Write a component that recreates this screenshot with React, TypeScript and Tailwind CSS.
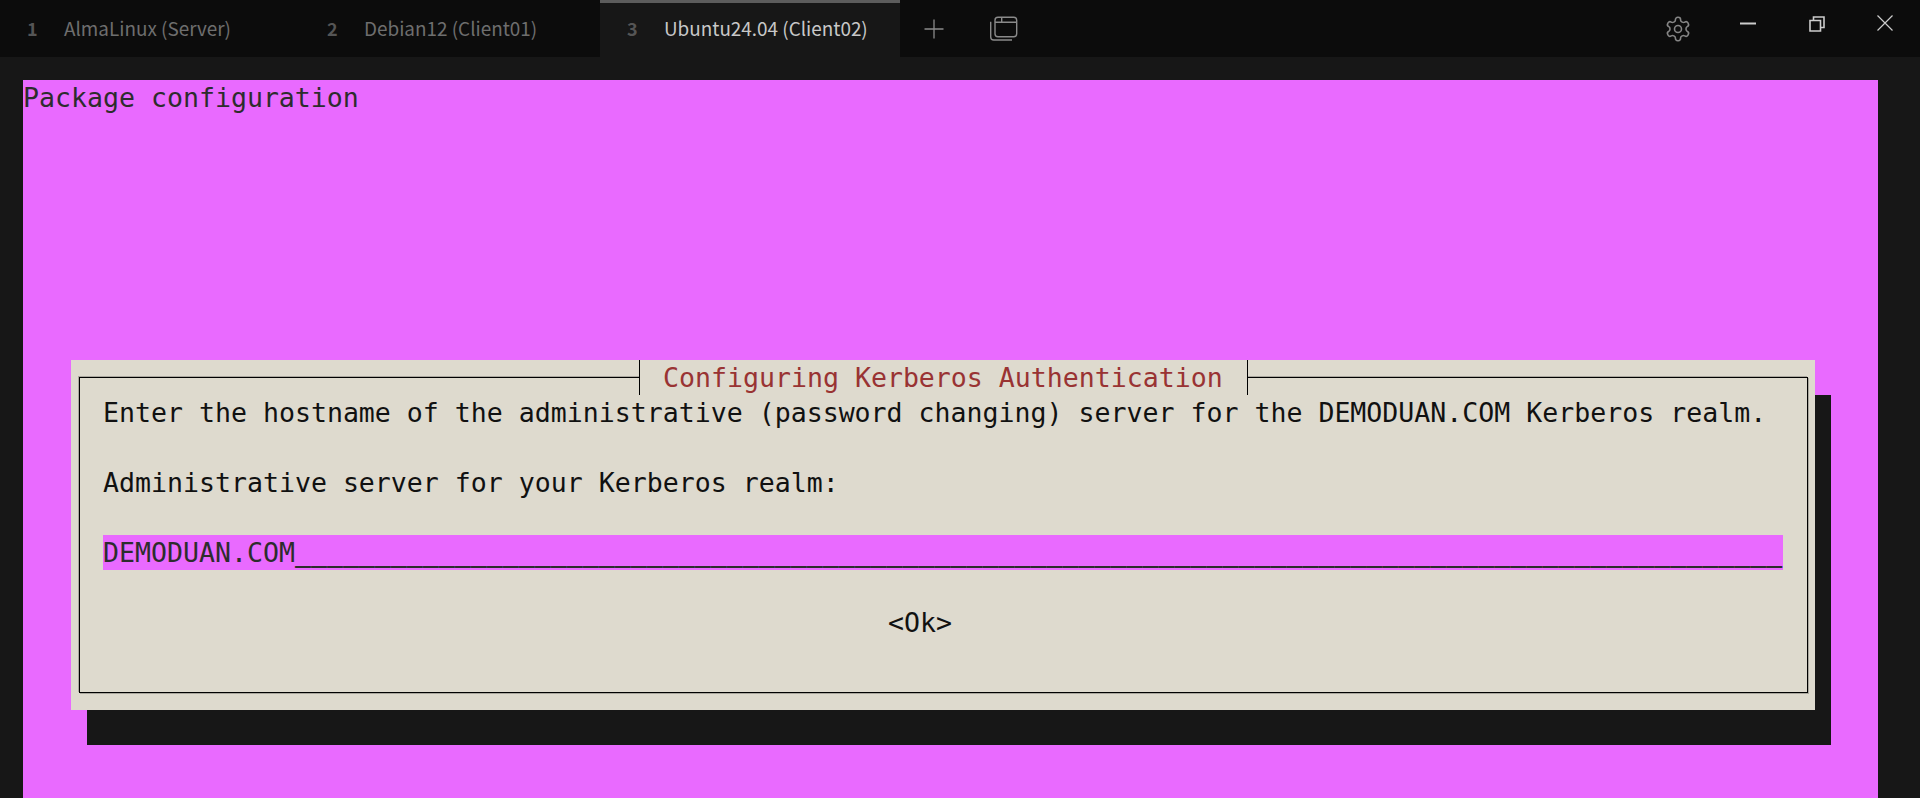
import React from "react";

const mono = "font-['DejaVu_Sans_Mono',monospace] text-[26.57px] leading-[35px] whitespace-pre";

function Tab({ n, label, active }: { n: string; label: string; active?: boolean }) {
  return (
    <div
      className={
        "flex h-[57px] w-[300px] items-center " +
        (active ? "border-t-[3px] border-[#5c5c5c] bg-[#171717] pb-[3px] text-[#c8c8c8]" : "bg-[#0c0c0c] text-[#6e6e6e]")
      }
    >
      <span className="w-[37px] pl-[27px] text-[18px] font-bold text-[#555555]">{n}</span>
      <span className="pl-[27px] text-[18.9px] whitespace-pre">{label}</span>
    </div>
  );
}

export default function App() {
  return (
    <div className="flex h-[798px] w-[1920px] flex-col overflow-hidden bg-[#171717] font-['Noto_Sans_CJK_SC','Noto_Sans',sans-serif]">
      <header className="flex h-[57px] shrink-0 items-center bg-[#0c0c0c]">
        <Tab n="1" label="AlmaLinux (Server)" />
        <Tab n="2" label="Debian12 (Client01)" />
        <Tab n="3" label="Ubuntu24.04 (Client02)" active />
        <svg className="ml-[23px] text-[#8a8a8a]" width="22" height="22" viewBox="0 0 22 22" fill="none" stroke="currentColor" strokeWidth="1.3">
          <path d="M11 1.5v19M1.5 11h19" />
        </svg>
        <svg className="ml-[45px] text-[#8a8a8a]" width="28" height="26" viewBox="0 0 28 26" fill="none" stroke="currentColor" strokeWidth="1.4">
          <path d="M8 1.3h15.7a3 3 0 0 1 3 3v13.4a3 3 0 0 1-3 3H8a3 3 0 0 1-3-3V4.3a3 3 0 0 1 3-3ZM5 6.3h21.7M11.7 1.3v5" />
          <path d="M.7 5.7V21a3 3 0 0 0 3 3H22" />
        </svg>
        <svg className="ml-[646px] text-[#858585]" width="28" height="28" viewBox="0 0 24 24" fill="none" stroke="currentColor" strokeWidth="1.35" strokeLinecap="round" strokeLinejoin="round">
          <path d="M12.22 2h-.44a2 2 0 0 0-2 2v.18a2 2 0 0 1-1 1.73l-.43.25a2 2 0 0 1-2 0l-.15-.08a2 2 0 0 0-2.73.73l-.22.38a2 2 0 0 0 .73 2.73l.15.1a2 2 0 0 1 1 1.72v.51a2 2 0 0 1-1 1.74l-.15.09a2 2 0 0 0-.73 2.73l.22.38a2 2 0 0 0 2.73.73l.15-.08a2 2 0 0 1 2 0l.43.25a2 2 0 0 1 1 1.73V20a2 2 0 0 0 2 2h.44a2 2 0 0 0 2-2v-.18a2 2 0 0 1 1-1.73l.43-.25a2 2 0 0 1 2 0l.15.08a2 2 0 0 0 2.73-.73l.22-.39a2 2 0 0 0-.73-2.73l-.15-.08a2 2 0 0 1-1-1.74v-.5a2 2 0 0 1 1-1.74l.15-.09a2 2 0 0 0 .73-2.73l-.22-.38a2 2 0 0 0-2.73-.73l-.15.08a2 2 0 0 1-2 0l-.43-.25a2 2 0 0 1-1-1.73V4a2 2 0 0 0-2-2z" />
          <circle cx="12" cy="12" r="3" />
        </svg>
        <svg className="mb-[11px] ml-[48px] text-[#cccccc]" width="16" height="3" viewBox="0 0 16 3" fill="none" stroke="currentColor" strokeWidth="2">
          <path d="M0 1.5h16" />
        </svg>
        <svg className="mb-[10px] ml-[53px] text-[#cccccc]" width="16" height="16" viewBox="0 0 16 16" fill="none" stroke="currentColor" strokeWidth="1.6">
          <path d="M1 4.5h10.5V15H1zM4.5 4.5V1H15v10.5h-3.5" />
        </svg>
        <svg className="mb-[11px] ml-[52px] text-[#cccccc]" width="16" height="16" viewBox="0 0 16 16" fill="none" stroke="currentColor" strokeWidth="1.2">
          <path d="M.5.5l15 15M15.5.5l-15 15" />
        </svg>
      </header>

      <main className="flex-1 pt-[23px] pl-[23px]">
        <div className={"h-[718px] w-[1855px] bg-[#e96aff] text-[#2d2d2d] " + mono}>
          <div className="h-[280px]">Package configuration</div>
          <div className="ml-[48px] h-[350px] w-[1744px] bg-[#dedace] pt-[17px] pl-[8px] shadow-[16px_35px_0_0_#171717]">
            <div className="relative h-[316px] w-[1729px] border border-[#000000] pt-[17px] pl-[23px] text-[#111111] shadow-[1px_1px_0_0_#aaa79e,-1px_-1px_0_0_#aaa79e]">
              <div className="absolute top-[-18px] left-[559px] h-[35px] w-[609px] border-x border-[#000000] bg-[#dedace] pl-[23px] text-[#993333]">
                Configuring Kerberos Authentication
              </div>
              <div>Enter the hostname of the administrative (password changing) server for the DEMODUAN.COM Kerberos realm.</div>
              <div className="h-[35px]" />
              <div>Administrative server for your Kerberos realm:</div>
              <div className="h-[35px]" />
              <div className="w-[1680px] bg-[#e96aff] text-[#2d2d2d]">
                DEMODUAN.COM
                <span className="[text-shadow:0_-1px_0_#2d2d2d]">{"_".repeat(93)}</span>
              </div>
              <div className="h-[35px]" />
              <div className="pl-[785px]">{"<Ok>"}</div>
            </div>
          </div>
        </div>
      </main>
    </div>
  );
}
